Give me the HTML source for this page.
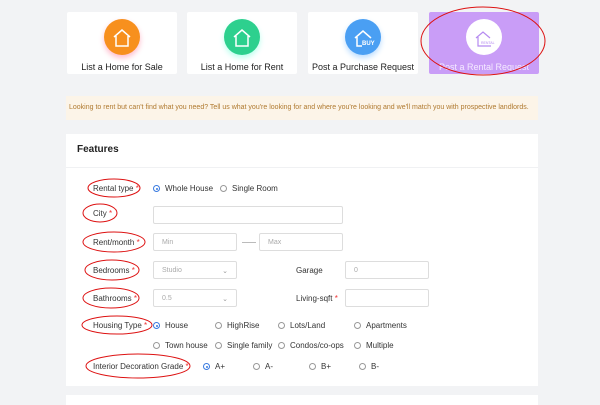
<!DOCTYPE html>
<html><head><style>
*{margin:0;padding:0;box-sizing:border-box}
body{width:600px;height:400px;background:#f2f3f5;font-family:"Liberation Sans",sans-serif;position:relative;overflow:hidden;color:#333}
.a{position:absolute}
.card{position:absolute;top:12px;width:110px;height:62px;background:#fff;border-radius:2px;text-align:center;font-size:9px;color:#222}
.card .ic{position:absolute;left:37px;top:7px;width:36px;height:36px;border-radius:50%}
.card .t{position:absolute;top:50px;left:0;right:0;white-space:nowrap}
.lbl{position:absolute;font-size:8px;color:#333;white-space:nowrap}
.lbl b{color:#e33;font-weight:normal}
.inp{position:absolute;height:18px;border:1px solid #ddd;border-radius:2px;background:#fff;font-size:7px;color:#aaa;padding:5px 8px}
.r{position:absolute;font-size:8px;color:#333;white-space:nowrap}
.r i{display:inline-block;width:7px;height:7px;border:1px solid #999;border-radius:50%;margin-right:5px;vertical-align:-1px;position:relative}
.r i.on{border-color:#3a7be0}
.r i.on:after{content:"";position:absolute;left:1.5px;top:1.5px;width:2px;height:2px;border-radius:50%;background:#3a7be0}
</style></head><body>
<div class="card" style="left:67px"><div class="ic" style="background:#f7901e;box-shadow:0 3px 6px #fbc;"></div><div class="t">List a Home for Sale</div></div>
<div class="card" style="left:187px"><div class="ic" style="background:#2dd08e;box-shadow:0 3px 6px #bfe"></div><div class="t">List a Home for Rent</div></div>
<div class="card" style="left:308px"><div class="ic" style="background:#4a9ff3;box-shadow:0 3px 6px #bdf"></div><div class="t">Post a Purchase Request</div></div>
<div class="card" style="left:429px;background:#c99df7;color:#f4eaff"><div class="ic" style="background:#fff"></div><div class="t">Post a Rental Request</div></div>
<svg class="a" style="left:0;top:0" width="600" height="400">
<g fill="none" stroke="#fff" stroke-width="1.5">
<path d="M114 37 L122 30 L130 37 M116 36 V46 H128 V36"/>
<path d="M234 37 L242 30 L250 37 M236 36 V46 H248 V36"/>
<path d="M355 38 L363 31 L371 38 M357 37 V46 H362"/>
</g>
<text x="362" y="45" font-size="6" fill="#fff" font-family="Liberation Sans" font-weight="bold">BUY</text>
<path d="M476 38 L483 32 L490 38 M478 37 V46 H491" fill="none" stroke="#b58af0" stroke-width="1.2"/>
<text x="481" y="44" font-size="3.5" fill="#b58af0" font-family="Liberation Sans">RENTAL</text>
</svg>
<div class="a" style="left:66px;top:96px;width:472px;height:24px;background:#fcf4e8;font-size:7px;color:#b07a30;padding-top:8px;padding-left:3px;white-space:nowrap">Looking to rent but can't find what you need? Tell us what you're looking for and where you're looking and we'll match you with prospective landlords.</div>
<div class="a" style="left:66px;top:134px;width:472px;height:252px;background:#fff"></div>
<div class="a" style="left:66px;top:167px;width:472px;height:1px;background:#f0f1f3"></div>
<div class="a" style="left:66px;top:395px;width:472px;height:10px;background:#fff"></div>
<div class="a" style="left:77px;top:144px;font-size:10px;font-weight:bold;color:#222">Features</div>
<div class="lbl" style="left:93px;top:184px">Rental type <b>*</b></div>
<div class="r" style="left:153px;top:184px"><i class="on"></i>Whole House</div>
<div class="r" style="left:220px;top:184px"><i></i>Single Room</div>
<div class="lbl" style="left:93px;top:209px">City <b>*</b></div>
<div class="inp" style="left:153px;top:206px;width:190px"></div>
<div class="lbl" style="left:93px;top:238px">Rent/month <b>*</b></div>
<div class="inp" style="left:153px;top:233px;width:84px">Min</div>
<div class="a" style="left:242px;top:242px;width:14px;height:1px;background:#bbb"></div>
<div class="inp" style="left:259px;top:233px;width:84px">Max</div>
<div class="lbl" style="left:93px;top:266px">Bedrooms <b>*</b></div>
<div class="inp" style="left:153px;top:261px;width:84px">Studio<span style="float:right;color:#999">&#8964;</span></div>
<div class="lbl" style="left:296px;top:266px">Garage</div>
<div class="inp" style="left:345px;top:261px;width:84px">0</div>
<div class="lbl" style="left:93px;top:294px">Bathrooms <b>*</b></div>
<div class="inp" style="left:153px;top:289px;width:84px">0.5<span style="float:right;color:#999">&#8964;</span></div>
<div class="lbl" style="left:296px;top:294px">Living-sqft <b>*</b></div>
<div class="inp" style="left:345px;top:289px;width:84px"></div>
<div class="lbl" style="left:93px;top:321px">Housing Type <b>*</b></div>
<div class="r" style="left:153px;top:321px"><i class="on"></i>House</div>
<div class="r" style="left:215px;top:321px"><i></i>HighRise</div>
<div class="r" style="left:278px;top:321px"><i></i>Lots/Land</div>
<div class="r" style="left:354px;top:321px"><i></i>Apartments</div>
<div class="r" style="left:153px;top:341px"><i></i>Town house</div>
<div class="r" style="left:215px;top:341px"><i></i>Single family</div>
<div class="r" style="left:278px;top:341px"><i></i>Condos/co-ops</div>
<div class="r" style="left:354px;top:341px"><i></i>Multiple</div>
<div class="lbl" style="left:93px;top:362px">Interior Decoration Grade <b>*</b></div>
<div class="r" style="left:203px;top:362px"><i class="on"></i>A+</div>
<div class="r" style="left:253px;top:362px"><i></i>A-</div>
<div class="r" style="left:309px;top:362px"><i></i>B+</div>
<div class="r" style="left:359px;top:362px"><i></i>B-</div>
<svg class="a" style="left:0;top:0" width="600" height="400"><g fill="none" stroke="#d11" stroke-width="1">
<ellipse cx="483" cy="41" rx="62" ry="34"/>
<ellipse cx="114" cy="188" rx="26" ry="9"/>
<ellipse cx="100" cy="213" rx="17" ry="9"/>
<ellipse cx="114" cy="242" rx="31" ry="10"/>
<ellipse cx="112" cy="270" rx="27" ry="10"/>
<ellipse cx="111" cy="298" rx="28" ry="10"/>
<ellipse cx="117" cy="325" rx="35" ry="9"/>
<ellipse cx="138" cy="366" rx="52" ry="12"/>
</g></svg>
</body></html>
